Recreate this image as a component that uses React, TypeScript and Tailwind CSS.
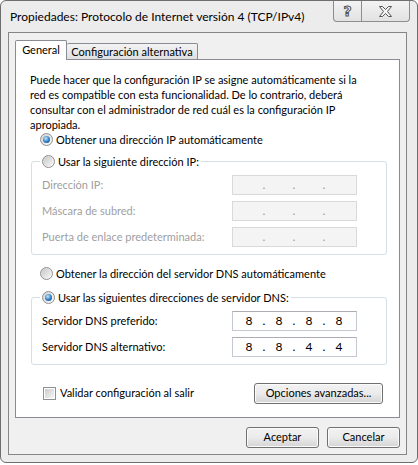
import React from "react";

function Radio({ checked, children }: { checked?: boolean; children: React.ReactNode }) {
  return (
    <span className="flex h-[15px] items-center gap-[3px] whitespace-nowrap leading-[15px]">
      <span className="flex h-[13px] w-[13px] shrink-0 items-center justify-center rounded-full border border-[#8f8f8f] bg-gradient-to-br from-[#d0d0d0] to-[#fdfdfd]">
        {checked ? (
          <span className="h-[7px] w-[7px] rounded-full bg-[radial-gradient(circle_at_40%_35%,#c4e8fc_0%,#2d7cc2_55%,#0d3f73_100%)]" />
        ) : (
          <span className="h-[9px] w-[9px] rounded-full bg-gradient-to-br from-[#c9c9c9] to-[#f6f6f6]" />
        )}
      </span>
      {children}
    </span>
  );
}

function IpField({ parts, disabled }: { parts?: string[]; disabled?: boolean }) {
  const segs = parts ?? ["", "", "", ""];
  return (
    <div
      className={
        disabled
          ? "flex h-[20px] w-[125px] items-center border border-[#d9d9d9] bg-[#f4f4f4] pl-[5px] text-[12px] text-[#9c9c9c]"
          : "flex h-[20px] w-[125px] items-center border border-[#c5cad2] border-t-[#abadb3] bg-white pl-[5px] text-[12px] text-black"
      }
    >
      {segs.map((s, i) => (
        <React.Fragment key={i}>
          {i > 0 && <span className="w-[8px] text-center">.</span>}
          <span className="w-[22px] text-center">{s}</span>
        </React.Fragment>
      ))}
    </div>
  );
}

function Row({ label, children, disabled }: { label: string; children: React.ReactNode; disabled?: boolean }) {
  return (
    <div className="flex h-[20px] items-center justify-between">
      <span className={disabled ? "text-[#a0a0a0]" : "text-black"}>{label}</span>
      {children}
    </div>
  );
}

function Button({ children, width }: { children: React.ReactNode; width: string }) {
  return (
    <button
      className={`${width} flex h-[21px] items-center justify-center rounded-[3px] border border-[#707070] bg-gradient-to-b from-[#f2f2f2] via-[#ebebeb] to-[#d4d4d4] text-[11px] text-black shadow-[inset_0_0_0_1px_#fbfbfb]`}
    >
      {children}
    </button>
  );
}

export default function App() {
  return (
    <div className="h-[465px] w-[418px] whitespace-nowrap bg-white font-['Lato',sans-serif] text-[11px] text-black">
      <div className="flex h-[463px] w-[418px] flex-col rounded-[6px] border border-[#6e6e6e] bg-[#ececec]">
        {/* Title bar */}
        <div className="flex h-[31px] items-start justify-between">
          <div className="pl-[9px] pt-[8px] text-[12px] leading-[16px]">
            Propiedades: Protocolo de Internet versión 4 (TCP/IPv4)
          </div>
          <div className="mr-[7px] flex h-[21px]">
            <div className="flex w-[29px] items-center justify-center rounded-bl-[4px] border border-t-0 border-[#8d8d8d] bg-gradient-to-b from-[#f3f3f3] to-[#e2e2e2]">
              <span className="font-['DejaVu_Sans',sans-serif] text-[14px] leading-none font-bold text-transparent [-webkit-text-stroke:1px_#555]">
                ?
              </span>
            </div>
            <div className="flex w-[48px] items-center justify-center rounded-br-[4px] border border-t-0 border-l-0 border-[#8d8d8d] bg-gradient-to-b from-[#f3f3f3] to-[#e2e2e2]">
              <svg width="13" height="11" viewBox="0 0 13 11">
                <polygon
                  points="0.5,0.5 3.5,0.5 6.5,3.5 9.5,0.5 12.5,0.5 8.5,5.5 12.5,10.5 9.5,10.5 6.5,7.5 3.5,10.5 0.5,10.5 4.5,5.5"
                  fill="#f4f4f4"
                  stroke="#555"
                  strokeWidth="1"
                />
              </svg>
            </div>
          </div>
        </div>

        {/* Client area */}
        <div className="ml-[7px] flex h-[423px] w-[399px] flex-col border border-[#858585] bg-[#f0f0f0] pt-[7px]">
          {/* Tabs */}
          <div className="ml-[6px] flex items-end">
            <div className="relative z-10 -mb-px flex h-[20px] w-[52px] items-start justify-center rounded-t-[2px] border border-b-0 border-[#898c95] bg-white pt-[1px] leading-[16px]">
              General
            </div>
            <div className="flex h-[16px] w-[131px] items-center justify-center rounded-t-[2px] border border-b-0 border-l-0 border-[#898c95] bg-gradient-to-b from-[#f3f3f3] to-[#e0e0e0] leading-[16px]">
              Configuración alternativa
            </div>
          </div>

          {/* Panel */}
          <div className="ml-[6px] flex h-[359px] w-[385px] flex-col border border-[#898c95] bg-white">
            <p className="ml-[14px] mt-[12px] leading-[15px]">
              Puede hacer que la configuración IP se asigne automáticamente si la
              <br />
              red es compatible con esta funcionalidad. De lo contrario, deberá
              <br />
              consultar con el administrador de red cuál es la configuración IP
              <br />
              apropiada.
            </p>

            <div className="ml-[24px] mt-0">
              <Radio checked>Obtener una dirección IP automáticamente</Radio>
            </div>

            <fieldset className="ml-[15px] mr-[12px] mt-[7px] rounded-[3px] border border-[#d5dfe5] px-[10px] pb-[7px] pr-[29px] pt-[6px]">
              <legend className="ml-[-2px] px-[2px]">
                <Radio>Usar la siguiente dirección IP:</Radio>
              </legend>
              <div className="flex flex-col gap-[6px]">
                <Row label="Dirección IP:" disabled>
                  <IpField disabled />
                </Row>
                <Row label="Máscara de subred:" disabled>
                  <IpField disabled />
                </Row>
                <Row label="Puerta de enlace predeterminada:" disabled>
                  <IpField disabled />
                </Row>
              </div>
            </fieldset>

            <div className="ml-[24px] mt-[11px]">
              <Radio>Obtener la dirección del servidor DNS automáticamente</Radio>
            </div>

            <fieldset className="ml-[15px] mr-[12px] mt-[9px] rounded-[3px] border border-[#d5dfe5] px-[10px] pb-[7px] pr-[29px] pt-[6px]">
              <legend className="ml-[-2px] px-[2px]">
                <Radio checked>Usar las siguientes direcciones de servidor DNS:</Radio>
              </legend>
              <div className="flex flex-col gap-[6px]">
                <Row label="Servidor DNS preferido:">
                  <IpField parts={["8", "8", "8", "8"]} />
                </Row>
                <Row label="Servidor DNS alternativo:">
                  <IpField parts={["8", "8", "4", "4"]} />
                </Row>
              </div>
            </fieldset>

            <div className="ml-[27px] mr-[16px] mt-[18px] flex items-center justify-between">
              <span className="flex items-center gap-[4px]">
                <span className="flex h-[13px] w-[13px] items-center justify-center border border-[#8f8f8f] bg-white">
                  <span className="h-[9px] w-[9px] bg-gradient-to-br from-[#cbcbcb] to-[#f7f7f7]" />
                </span>
                Validar configuración al salir
              </span>
              <Button width="w-[129px]">Opciones avanzadas...</Button>
            </div>
          </div>

          {/* Dialog buttons */}
          <div className="mr-[6px] mt-[9px] flex justify-end gap-[8px]">
            <Button width="w-[73px]">Aceptar</Button>
            <Button width="w-[73px]">Cancelar</Button>
          </div>
        </div>
      </div>
    </div>
  );
}
